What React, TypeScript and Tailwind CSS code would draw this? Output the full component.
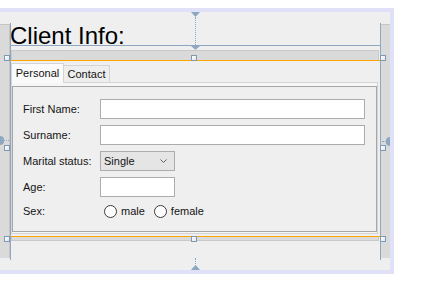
import React from 'react';

const ui = { fontFamily: '"Liberation Sans", Arial, sans-serif' };

const Handle = ({ x, y }: { x: number; y: number }) => (
  <div
    className="absolute w-[6px] h-[6px] border border-[#7d99b5] bg-gradient-to-br from-white to-[#dfe6ee]"
    style={{ left: x, top: y }}
  />
);

const Field = ({ w = 'w-[265px]' }: { w?: string }) => (
  <div className={`${w} h-[20px] bg-white border border-[#acacac]`} />
);

const Row = ({ label, children, className = '' }: { label: string; children: React.ReactNode; className?: string }) => (
  <div className={`flex items-center h-[20px] ${className}`}>
    <span className="w-[77px] text-[11px] text-[#141414]">{label}</span>
    {children}
  </div>
);

const Radio = ({ label }: { label: string }) => (
  <div className="flex items-center gap-[4px]">
    <span className="w-[13px] h-[13px] rounded-full border border-[#3a3a3a] bg-white" />
    <span className="text-[11px] text-[#141414]">{label}</span>
  </div>
);

export default function App() {
  return (
    <div className="relative w-[424px] h-[293px] bg-white pt-[8px] overflow-hidden" style={ui}>
      {/* design frame */}
      <div className="w-[394px] h-[266px] border-y-4 border-r-4 border-[#e0e0f8] bg-[#efefef] flex items-start">
        <div className="mt-[12px] w-[10px] h-[234px] bg-[#dadada] border-r border-t border-[#c6c6c6]" />

        <div className="w-[370px] flex flex-col">
          <div className="mt-[10px] h-[28px] leading-[28px] text-[24px] text-black">Client Info:</div>

          <div className="ml-[1px] w-[368px] h-[191px] bg-[#dadada] border border-[#c9c9c9] pt-[9px]">
            <div className="ml-[-2px] w-[371px] h-[177px] border border-[#ffa500] bg-[#efefef] pt-[2px]">
              {/* tabs */}
              <div className="flex items-end h-[19px]">
                <div className="relative z-10 w-[53px] h-[20px] mb-[-1px] bg-[#fafafa] border-x border-t border-[#d4d4d4] flex items-center justify-center text-[11px] text-[#141414]">
                  Personal
                </div>
                <div className="w-[46px] h-[17px] bg-[#eeeeee] border-r border-t border-[#d4d4d4] flex items-center justify-center text-[11px] text-[#141414]">
                  Contact
                </div>
              </div>

              <div className="w-[367px] h-[152px] border border-[#d4d4d4] bg-[#f6f6f6] pt-[3px] pb-[1px]">
                <div className="h-[146px] border border-[#a7a7a7] bg-[#efefef] pt-[12px] pl-[10px]">
                  <Row label="First Name:">
                    <Field />
                  </Row>
                  <Row label="Surname:" className="mt-[6px]">
                    <Field />
                  </Row>
                  <Row label="Marital status:" className="mt-[6px]">
                    <div className="w-[75px] h-[20px] bg-[#e5e5e5] border border-[#acacac] flex items-center justify-between pl-[3px] pr-[7px]">
                      <span className="text-[11px] text-[#141414]">Single</span>
                      <svg width="7" height="4" viewBox="0 0 7 4">
                        <polyline points="0.5,0.5 3.5,3.5 6.5,0.5" fill="none" stroke="#606060" strokeWidth="1" />
                      </svg>
                    </div>
                  </Row>
                  <Row label="Age:" className="mt-[6px]">
                    <Field w="w-[75px]" />
                  </Row>
                  <Row label="Sex:" className="mt-[4px]">
                    <div className="ml-[4px] flex items-center gap-[9px]">
                      <Radio label="male" />
                      <Radio label="female" />
                    </div>
                  </Row>
                </div>
              </div>
            </div>
          </div>
        </div>

        <div className="mt-[12px] w-[10px] h-[234px] bg-[#dadada] border-l border-t border-[#c6c6c6]" />
      </div>

      {/* guide lines */}
      <div className="absolute left-[10px] top-[23px] w-px h-[237px] bg-[#8ea8c2]" />
      <div className="absolute left-[380px] top-[23px] w-px h-[237px] bg-[#8ea8c2]" />
      <div className="absolute left-[10px] top-[45px] w-[371px] h-px bg-[#8ea8c2]" />

      {/* anchors */}
      <svg className="absolute left-[191px] top-[12px]" width="9" height="5" viewBox="0 0 9 5">
        <path d="M0 0 H9 L5.5 4 Q4.5 5 3.5 4 Z" fill="#8ea8c2" />
      </svg>
      <div className="absolute left-[195px] top-[17px] h-[28px] w-0 border-l border-dotted border-[#8ea8c2]" />
      <svg className="absolute left-[191px] top-[46px]" width="9" height="4" viewBox="0 0 9 4">
        <path d="M0 0 H9 L5.5 3 Q4.5 4 3.5 3 Z" fill="#8ea8c2" />
      </svg>

      <div className="absolute left-[195px] top-[258px] h-[8px] w-0 border-l border-dotted border-[#8ea8c2]" />
      <svg className="absolute left-[191px] top-[265px]" width="9" height="5" viewBox="0 0 9 5">
        <path d="M0 5 H9 L6 1.5 Q4.5 0 3 1.5 Z" fill="#8ea8c2" />
      </svg>

      <svg className="absolute left-0 top-[136px]" width="4" height="9" viewBox="0 0 4 9">
        <path d="M0 0 A4.5 4.5 0 0 1 0 9 Z" fill="#8ea8c2" />
      </svg>
      <div className="absolute left-[4px] top-[140px] w-[5px] h-0 border-t border-dotted border-[#8ea8c2]" />
      <svg className="absolute left-[386px] top-[137px]" width="4" height="9" viewBox="0 0 4 9">
        <path d="M4 0 A4.5 4.5 0 0 0 4 9 Z" fill="#8ea8c2" />
      </svg>
      <div className="absolute left-[382px] top-[141px] w-[4px] h-0 border-t border-dotted border-[#8ea8c2]" />

      {/* selection handles */}
      <Handle x={4} y={55} />
      <Handle x={191} y={55} />
      <Handle x={380} y={55} />
      <Handle x={4} y={145} />
      <Handle x={380} y={145} />
      <Handle x={4} y={236} />
      <Handle x={191} y={236} />
      <Handle x={380} y={236} />
    </div>
  );
}
